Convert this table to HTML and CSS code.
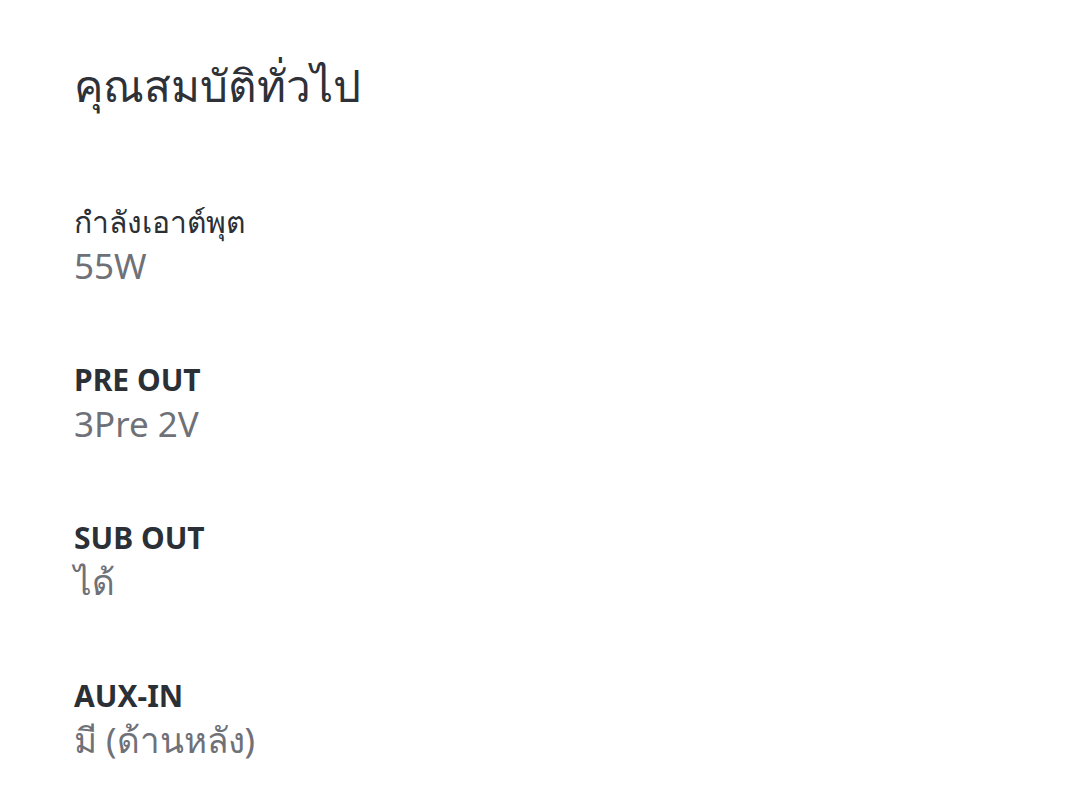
FILE: index.html
```html
<!DOCTYPE html>
<html lang="th">
  <head>
    <meta charset="UTF-8" />
    <title>คุณสมบัติทั่วไป</title>
    <link rel="stylesheet" href="styles.css">
  </head>
  <body>
    <div class="specs">
      <h1 class="specs-title">คุณสมบัติทั่วไป</h1>

      <div class="spec-item">
        <div class="spec-label spec-label-thai">กำลังเอาต์พุต</div>
        <div class="spec-value">55W</div>
      </div>

      <div class="spec-item">
        <div class="spec-label">PRE OUT</div>
        <div class="spec-value">3Pre 2V</div>
      </div>

      <div class="spec-item">
        <div class="spec-label">SUB OUT</div>
        <div class="spec-value">ได้</div>
      </div>

      <div class="spec-item">
        <div class="spec-label">AUX-IN</div>
        <div class="spec-value">มี (ด้านหลัง)</div>
      </div>
    </div>
  </body>
</html>
```

FILE: styles.css
```css
body {
  margin: 0;
  background-color: #fff;
  font-family: "Noto Sans", "Open Sans", sans-serif;
}

.specs {
  padding: 55px 74px 0;
}

.specs-title {
  margin: 0 0 86px;
  font-size: 44px;
  font-weight: normal;
  line-height: 60px;
  color: #2e3138;
}

.spec-item {
  margin-bottom: 70px;
}

.spec-label {
  font-size: 30px;
  font-weight: bold;
  line-height: 42px;
  color: #2b2f36;
}

/* thai label renders in regular weight */
.spec-label-thai {
  font-weight: normal;
}

.spec-value {
  font-size: 35px;
  line-height: 46px;
  color: #6f7178;
}
```
